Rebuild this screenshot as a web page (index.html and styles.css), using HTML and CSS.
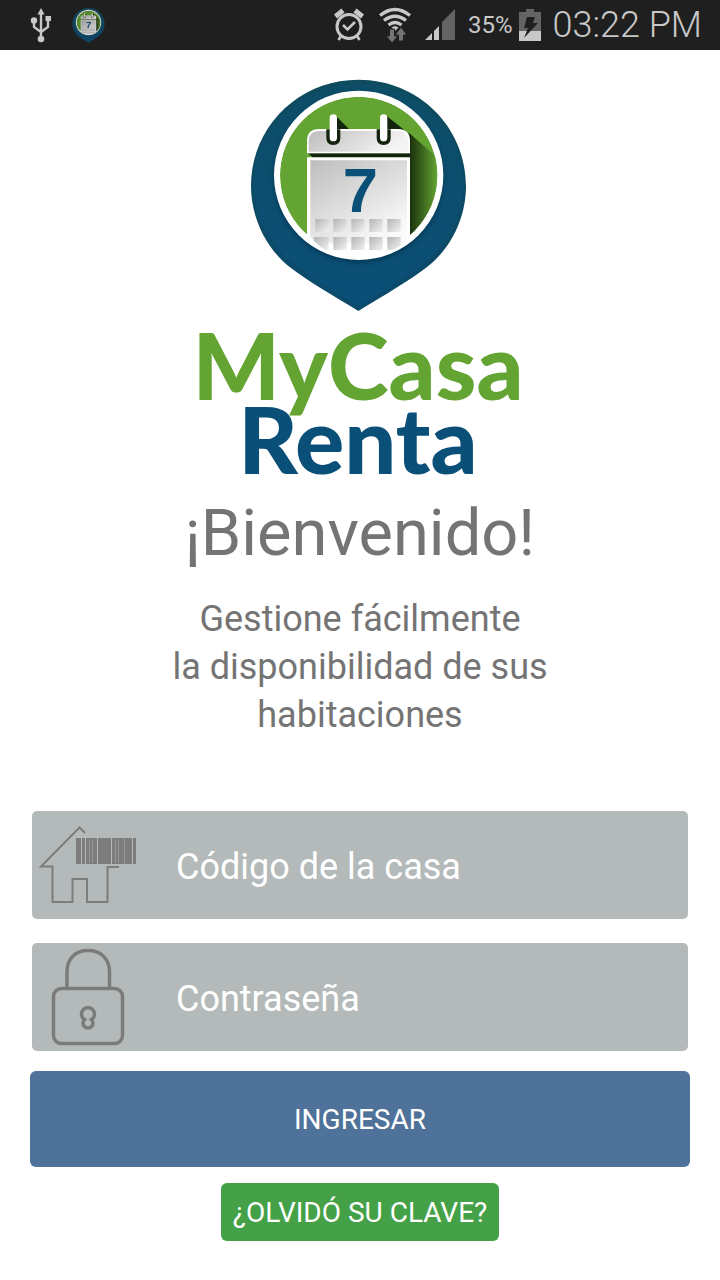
FILE: index.html
```html
<!DOCTYPE html>
<html lang="es">
<head>
<meta charset="utf-8">
<meta name="viewport" content="width=device-width, initial-scale=1">
<title>MyCasa Renta</title>
<link rel="stylesheet" href="styles.css">
</head>
<body>
<svg class="defs" aria-hidden="true">
  <defs>
    <linearGradient id="pin-edge" x1="0" y1="0" x2="0" y2="1"><stop offset="0" stop-color="#0e4b5e"/><stop offset="1" stop-color="#0b4a6b"/></linearGradient>
    <linearGradient id="pin-fill" x1="0" y1="0" x2="0" y2="1"><stop offset="0" stop-color="#0d4d66"/><stop offset="1" stop-color="#0a4f78"/></linearGradient>
    <linearGradient id="sheet" x1="0" y1="0" x2=".7" y2="1"><stop offset="0" stop-color="#bdbdbd"/><stop offset=".5" stop-color="#dcdcdc"/><stop offset="1" stop-color="#fafafa"/></linearGradient>
    <linearGradient id="band" x1="0" y1="0" x2="1" y2=".3"><stop offset="0" stop-color="#bdbdbd"/><stop offset="1" stop-color="#f4f4f4"/></linearGradient>
    <linearGradient id="cell" x1="0" y1="0" x2="1" y2="1"><stop offset="0" stop-color="#b4b4b4"/><stop offset="1" stop-color="#f2f2f2"/></linearGradient>
    <linearGradient id="shade" gradientUnits="userSpaceOnUse" x1="500" y1="0" x2="592" y2="0"><stop offset="0" stop-color="#14260a"/><stop offset=".3" stop-color="#2a4a14"/><stop offset="1" stop-color="#64a433"/></linearGradient>
    <filter id="soft" x="-20%" y="-20%" width="140%" height="140%"><feGaussianBlur stdDeviation="6"/></filter>
    <clipPath id="disc"><circle cx="356" cy="316" r="236"/></clipPath>
    <clipPath id="card"><circle cx="356" cy="316" r="246"/></clipPath>
    <symbol id="pin" viewBox="30 27 651 699">
      <path fill="url(#pin-edge)" d="M355 29C535 29 678 170 678 348C678 435 640 530 560 592C510 631 430 678 355 723C282 678 200 632 150 592C72 530 33 435 33 348C33 170 177 29 355 29Z"/>
      <path fill="url(#pin-fill)" d="M355 42C528 42 671 178 671 342C671 425 633 516 553 578C503 617 430 664 355 709C282 664 207 618 157 578C79 516 40 425 40 342C40 178 183 42 355 42Z"/>
      <circle cx="356" cy="324" r="254" fill="#062f49" opacity=".65" filter="url(#soft)"/>
      <circle cx="356" cy="316" r="254" fill="#fff"/>
      <g clip-path="url(#disc)">
        <circle cx="356" cy="316" r="236" fill="#64a433"/>
        <path fill="url(#shade)" d="M508 190L600 270V560H505Z"/>
        <path fill="#14230b" d="M288 138L330 180H288ZM440 138L512 195V215H440ZM205 250H510V266H222Z"/>
      </g>
      <g clip-path="url(#card)">
        <path fill="#fff" d="M201 250V213Q201 177 237 177H474Q510 177 510 213V250Z"/>
        <path fill="url(#band)" d="M206 245V216Q206 183 239 183H472Q505 183 505 216V245Z"/>
        <path fill="#fff" d="M201 262H510V580H201Z"/>
        <path fill="url(#sheet)" d="M211 271H501V520H255Q211 520 211 490Z"/>
        <g fill="url(#cell)">
          <rect x="226" y="447" width="40" height="39"/><rect x="280" y="447" width="40" height="39"/><rect x="334" y="447" width="40" height="39"/><rect x="388" y="447" width="40" height="39"/><rect x="442" y="447" width="40" height="39"/>
          <path d="M222 501H266V540H255Q236 528 222 512Z"/><rect x="280" y="501" width="40" height="39"/><rect x="334" y="501" width="40" height="39"/><rect x="388" y="501" width="40" height="39"/><rect x="442" y="501" width="40" height="39"/>
        </g>
        <path fill="none" stroke="#14230b" stroke-width="12" d="M265 178V204Q265 219 280 219T295 204V178M416 178V204Q416 219 431 219T446 204V178"/>
        <path stroke="#fff" stroke-width="22" stroke-linecap="round" d="M280 144V203M431 144V203"/>
        <text class="pin-day" x="361" y="426" text-anchor="middle">7</text>
      </g>
    </symbol>
  </defs>
</svg>

<header class="status">
  <div class="status-side status-left">
    <svg class="usb" viewBox="0 0 22 36" aria-hidden="true"><path fill="none" stroke="#c8c8c8" stroke-width="2.400" d="M11 5V32M4 13V20L11 25M18 11V20L11 25"/><path fill="#c8c8c8" d="M11 1L14.500 7.500H7.500ZM15.500 9H21V14H15.500Z"/><circle cx="4" cy="13.500" r="3.200" fill="#c8c8c8"/><circle cx="11" cy="32" r="3.300" fill="#c8c8c8"/></svg>
    <svg class="mini-pin" aria-hidden="true"><use href="#pin"/></svg>
  </div>
  <div class="status-side status-right">
    <svg class="alarm" viewBox="0 0 30 34" aria-hidden="true"><g fill="none" stroke="#c8c8c8"><circle cx="15" cy="18.500" r="12" stroke-width="3"/><path stroke-width="2.600" d="M9 17L13.500 21.500L21 14M7 28L4.500 32M23 28L25.500 32"/><path stroke-width="5" d="M1.500 8.500L9 2.500M28.500 8.500L21 2.500"/></g></svg>
    <svg class="wifi" viewBox="0 0 34 36" aria-hidden="true"><g fill="none" stroke="#c8c8c8" stroke-width="3.400"><path d="M2 8.500Q17 -3.500 32 8.500M6 13.500Q17 5 28 13.500M10.500 18Q17 13 23.500 18"/></g><path fill="#c8c8c8" d="M13.500 20.500Q17 18 20.500 20.500L17 24Z"/><path fill="#747474" stroke="#1f1f1f" stroke-width="1" d="M11.500 22H16.500V29H20L14 36L8 29H11.500ZM20.500 34H25.500V28H29L23 20L17 28H20.500Z"/></svg>
    <svg class="signal" viewBox="0 0 32 32" aria-hidden="true"><path fill="#c8c8c8" d="M1 31L8 24V31ZM10 31V22L15 17V31Z"/><path fill="#646464" d="M18 31V13L31 0V31Z"/></svg>
    <span class="percent">35%</span>
    <svg class="battery" viewBox="0 0 22 32" aria-hidden="true"><path fill="#646464" d="M0 3H7V0H15V3H22V22H0Z"/><path fill="#c8c8c8" d="M0 22H22V32H0Z"/><path fill="#1f1f1f" d="M8 8H16L14 14H19L5 29L9 19H5Z"/></svg>
    <time class="clock">03:22 PM</time>
  </div>
</header>

<main class="login">
  <div class="brand">
    <svg class="logo" role="img" aria-label="MyCasa Renta"><use href="#pin"/></svg>
    <span class="brand-line brand-top">MyCasa</span>
    <span class="brand-line brand-bottom">Renta</span>
  </div>
  <h1 class="welcome">¡Bienvenido!</h1>
  <p class="intro">Gestione fácilmente<br>la disponibilidad de sus<br>habitaciones</p>

  <form class="form">
    <label class="field">
      <svg class="field-icon" viewBox="0 0 144 108" aria-hidden="true">
        <path fill="none" stroke="#7d7d7d" stroke-width="2" d="M53 22L47.500 16.500L9 55.500H20.500V91H40.500V68H55V91H75.500V56H87"/>
        <path fill="#7d7d7d" d="M44 27H104V53H44Z"/>
        <path stroke="#b4baba" stroke-width="1" d="M49.500 27V53M53.500 27V53M65.500 27V53M79.500 27V53M100.500 27V53"/>
        <path stroke="#959898" stroke-width="1" d="M57.500 28V52M60.500 28V52M83.500 28V52M86.500 28V52M92.500 27V53"/>
      </svg>
      <input class="input" type="text" placeholder="Código de la casa" aria-label="Código de la casa">
    </label>
    <label class="field">
      <svg class="field-icon" viewBox="0 0 144 108" aria-hidden="true">
        <g fill="none" stroke="#7b7b7b" stroke-width="3.500"><rect x="21.500" y="45.500" width="69" height="55" rx="8"/><path d="M35 45V29C35 15 44 7.500 56 7.500S77.500 15 77.500 29V45"/><path d="M52.500 76.500A6.500 6.500 0 1 1 59.500 76.500A5 5 0 1 1 52.500 76.500Z"/></g>
      </svg>
      <input class="input" type="password" placeholder="Contraseña" aria-label="Contraseña">
    </label>
    <button class="submit" type="submit">INGRESAR</button>
    <button class="forgot" type="button">¿OLVIDÓ SU CLAVE?</button>
  </form>
</main>
</body>
</html>
```
FILE: styles.css
```css
* { box-sizing: border-box; }

body {
  margin: 0;
  background: #fff;
  color: #747474;
  font-family: Roboto, "Liberation Sans", sans-serif;
}

.defs { position: absolute; width: 0; height: 0; }

.status {
  display: flex;
  justify-content: space-between;
  align-items: center;
  height: 50px;
  padding: 0 18px 0 30px;
  background: #1f1f1f;
  color: #c8c8c8;
}
.status-side { display: flex; align-items: center; }
.status-left { gap: 20px; }
.usb { width: 22px; height: 36px; }
.mini-pin { width: 33px; height: 35px; opacity: .8; }
.alarm { width: 30px; height: 34px; margin-right: 14px; }
.wifi { width: 34px; height: 36px; margin-right: 12px; }
.signal { width: 32px; height: 32px; margin-right: 12px; }
.percent { margin-right: 7px; font-size: 24px; }
.battery { width: 22px; height: 32px; margin-right: 11px; }
.clock { font-size: 36px; font-weight: 300; }

.login {
  display: flex;
  flex-direction: column;
  align-items: center;
  padding: 29px 30px 39px;
}

.brand {
  display: flex;
  flex-direction: column;
  align-items: center;
  padding-right: 4px;
}
.logo { width: 217px; height: 233px; margin-bottom: 16px; }
.pin-day { font: bold 190px "Liberation Sans", sans-serif; fill: #0a4f78; }
.brand-line {
  font-family: Lato, sans-serif;
  font-size: 92px;
  font-weight: 900;
  line-height: 74px;
}
.brand-top { color: #64a433; }
.brand-bottom { color: #0a4f78; }

.welcome {
  margin: 18px 0 0;
  font-size: 65px;
  font-weight: 400;
  line-height: 78px;
}
.intro {
  margin: 23px 0 0;
  font-size: 36px;
  line-height: 48px;
  text-align: center;
}

.form {
  display: flex;
  flex-direction: column;
  align-items: center;
  align-self: stretch;
  margin-top: 72px;
}
.field {
  display: flex;
  align-self: stretch;
  height: 108px;
  margin: 0 2px 24px;
  border-radius: 5px;
  background: #b4baba;
}
.field + .submit { margin-top: -4px; }
.field-icon { flex: none; width: 144px; height: 108px; }
.input {
  flex: 1;
  min-width: 0;
  padding: 4px 0 0;
  border: 0;
  outline: 0;
  background: none;
  color: #fff;
  font: 36px Roboto, sans-serif;
}
.input::placeholder { color: #fff; opacity: 1; }

.submit, .forgot {
  border: 0;
  border-radius: 6px;
  color: #fff;
  font: 28px Roboto, sans-serif;
}
.submit {
  align-self: stretch;
  height: 96px;
  background: #4f729a;
}
.forgot {
  height: 58px;
  margin-top: 16px;
  padding: 0 12px;
  background: #45a147;
}
```
